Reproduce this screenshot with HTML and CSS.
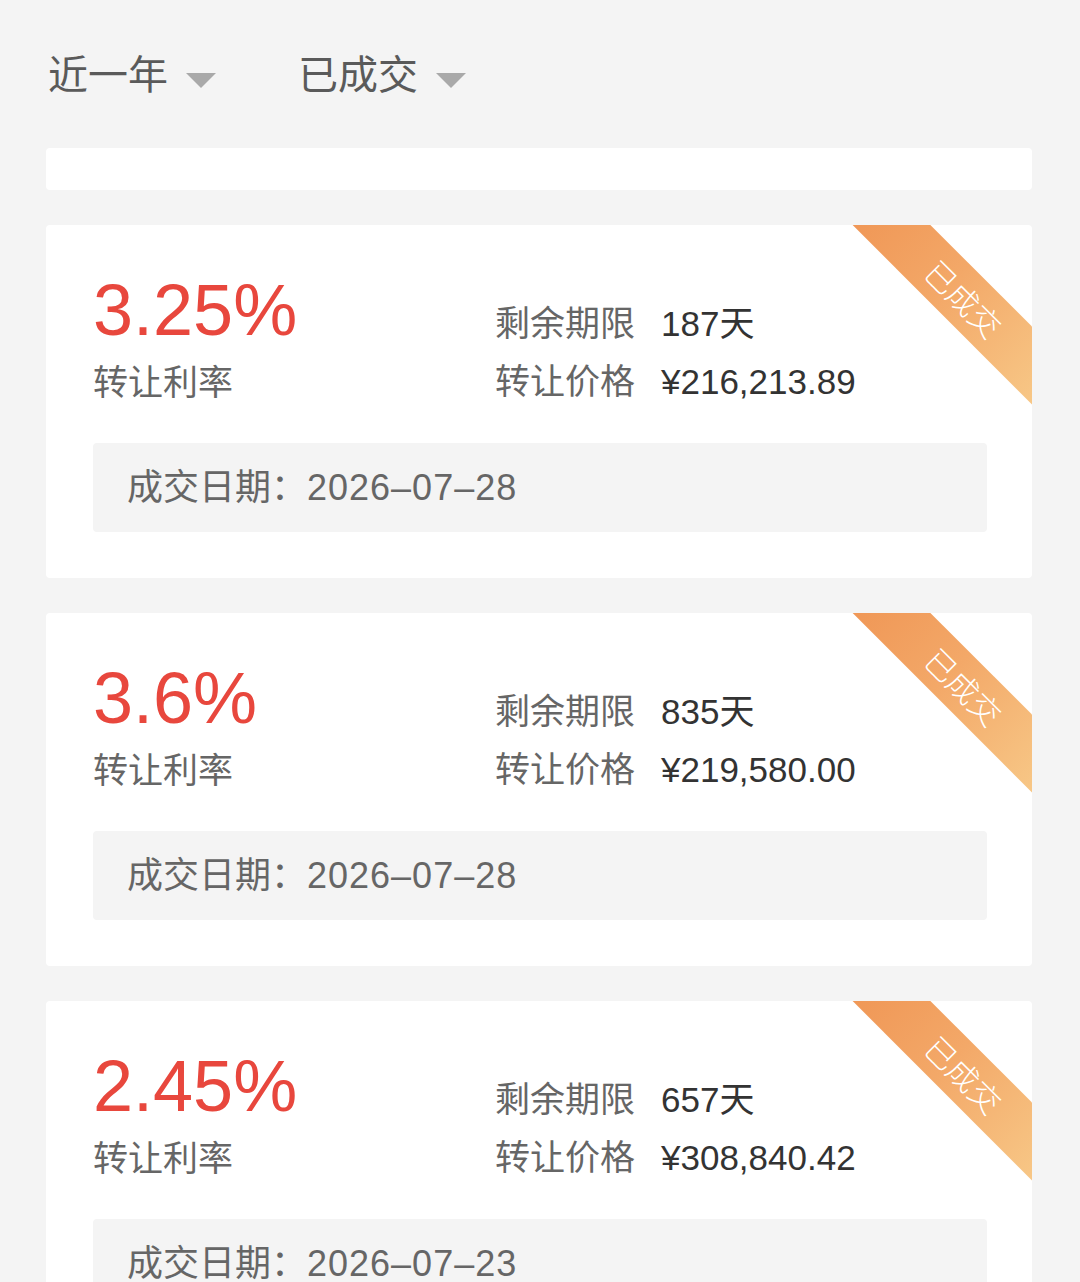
FILE: index.html
```html
<!DOCTYPE html>
<html lang="zh">
<head>
<meta charset="utf-8">
<link rel="stylesheet" href="styles.css">
</head>
<body>
<div class="page">
  <div class="filters">
    <div class="filter">近一年<span class="caret"></span></div>
    <div class="filter">已成交<span class="caret"></span></div>
  </div>
  <div class="stub"></div>
  <div class="card">
    <div class="ribbon"><span>已成交</span></div>
    <div class="top">
      <div class="left">
        <div class="rate">3.25%</div>
        <div class="label">转让利率</div>
      </div>
      <div class="right">
        <div class="row"><span class="k">剩余期限</span><span class="v">187天</span></div>
        <div class="row"><span class="k">转让价格</span><span class="v">¥216,213.89</span></div>
      </div>
    </div>
    <div class="date">成交日期：<span class="num">2026–07–28</span></div>
  </div>
  <div class="card">
    <div class="ribbon"><span>已成交</span></div>
    <div class="top">
      <div class="left">
        <div class="rate">3.6%</div>
        <div class="label">转让利率</div>
      </div>
      <div class="right">
        <div class="row"><span class="k">剩余期限</span><span class="v">835天</span></div>
        <div class="row"><span class="k">转让价格</span><span class="v">¥219,580.00</span></div>
      </div>
    </div>
    <div class="date">成交日期：<span class="num">2026–07–28</span></div>
  </div>
  <div class="card">
    <div class="ribbon"><span>已成交</span></div>
    <div class="top">
      <div class="left">
        <div class="rate">2.45%</div>
        <div class="label">转让利率</div>
      </div>
      <div class="right">
        <div class="row"><span class="k">剩余期限</span><span class="v">657天</span></div>
        <div class="row"><span class="k">转让价格</span><span class="v">¥308,840.42</span></div>
      </div>
    </div>
    <div class="date">成交日期：<span class="num">2026–07–23</span></div>
  </div>
</div>
</body>
</html>
```
FILE: styles.css
```css
html, body {
  margin: 0;
  padding: 0;
  background: #f4f4f4;
}
body {
  font-family: "Liberation Sans", "Noto Sans CJK SC", sans-serif;
  width: 1080px;
  height: 1282px;
  overflow: hidden;
}
.page {
  padding: 0 48px 0 46px;
}
.filters {
  display: flex;
  align-items: center;
  height: 148px;
  padding-left: 2px;
  box-sizing: border-box;
}
.filter {
  display: flex;
  align-items: center;
  font-size: 40px;
  line-height: 50px;
  color: #5a5a5a;
  margin-right: 82px;
  margin-top: 2px;
}
.caret {
  width: 0;
  height: 0;
  border-left: 15px solid transparent;
  border-right: 15px solid transparent;
  border-top: 15px solid #a9a9a9;
  margin-left: 18px;
  margin-top: 10px;
}
.stub {
  height: 42px;
  background: #fff;
  border-radius: 4px;
  margin-bottom: 35px;
}
.card {
  position: relative;
  overflow: hidden;
  background: #fff;
  border-radius: 4px;
  padding: 45px 45px 46px 47px;
  margin-bottom: 35px;
  height: 262px;
}
.top {
  display: flex;
  align-items: flex-end;
}
.left {
  width: 402px;
}
.rate {
  font-size: 72px;
  line-height: 81px;
  color: #e8473d;
}
.label {
  font-size: 35px;
  line-height: 57px;
  color: #666;
  padding-top: 3px;
}
.row {
  display: flex;
  font-size: 35px;
  line-height: 58px;
}
.k {
  color: #666;
  width: 166px;
}
.v {
  color: #333;
}
.date {
  margin-top: 32px;
  height: 89px;
  line-height: 89px;
  background: #f4f4f4;
  border-radius: 4px;
  padding-left: 34px;
  font-size: 36px;
  color: #666;
}
.num {
  letter-spacing: 1px;
}
.ribbon {
  position: absolute;
  left: 760px;
  top: 42px;
  width: 310px;
  height: 55px;
  transform: rotate(45deg);
  background: linear-gradient(to right, #ef9352, #f3a868 45%, #f8cd8c);
  display: flex;
  align-items: center;
  justify-content: center;
}
.ribbon span {
  color: #fff;
  font-size: 31px;
  font-family: "Noto Sans CJK SC", sans-serif;
  font-weight: 300;
  margin-left: 10px;
}
```
